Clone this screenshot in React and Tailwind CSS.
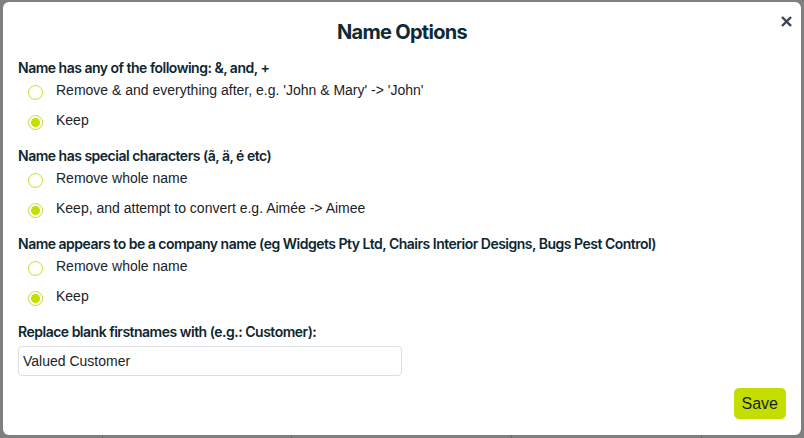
export default function App() {
    const sections = [
        {
            title: "Name has any of the following: &, and, +",
            options: ["Remove & and everything after, e.g. 'John & Mary' -> 'John'", "Keep"],
            selected: 1,
        },
        {
            title: "Name has special characters (ã, ä, é etc)",
            options: ["Remove whole name", "Keep, and attempt to convert e.g. Aimée -> Aimee"],
            selected: 1,
        },
        {
            title: "Name appears to be a company name (eg Widgets Pty Ltd, Chairs Interior Designs, Bugs Pest Control)",
            options: ["Remove whole name", "Keep"],
            selected: 1,
        },
    ];

    return (
        <div className="relative w-[804px] h-[438px] overflow-hidden bg-[#808080] font-['Liberation_Sans',Arial,sans-serif]">
            {/* dimmed page behind the modal */}
            <div className="absolute inset-x-0 bottom-0 h-[12px] flex">
                <div className="w-[103px] border-r border-[#6a6a6a]" />
                <div className="w-[189px] border-r border-[#6a6a6a]" />
                <div className="w-[220px] border-r border-[#6a6a6a]" />
                <div className="w-[190px] border-r border-[#6a6a6a]" />
                <div className="flex-1" />
            </div>

            <div className="absolute left-[3px] top-[2px] w-[798px] h-[433px] bg-white rounded-[6px] px-[15px] pt-[16px] pb-[16px] flex flex-col">
                <button className="absolute right-[9px] top-[13px] w-[12px] h-[12px] flex items-center justify-center text-[#3b4656]">
                    <svg viewBox="0 0 12 12" className="w-[11px] h-[11px]" fill="none" stroke="currentColor" strokeWidth="2.6" strokeLinecap="square">
                        <path d="M2 2 L10 10 M10 2 L2 10" />
                    </svg>
                </button>

                <h2 className="text-center text-[20px] leading-[28px] font-bold text-[#0f2a33] font-['Inter',sans-serif] tracking-[-0.7px]">
                    Name Options
                </h2>

                <div className="mt-[12px] flex flex-col gap-[16px]">
                    {sections.map((s, i) => (
                        <div key={i}>
                            <p className="text-[14px] leading-[20px] font-semibold text-[#0d2630] font-['Inter',sans-serif] tracking-[-0.5px]">
                                {s.title}
                            </p>
                            <div className="mt-[2px] flex flex-col gap-[10px]">
                                {s.options.map((o, j) => (
                                    <label key={j} className="flex items-start pl-[10px] text-[14px] leading-[20px] text-[#1a2328]">
                                        <span className="mt-[5px] w-[15px] h-[15px] rounded-full border-[1.5px] border-[#c6df1a] bg-white flex items-center justify-center shrink-0">
                                            {s.selected === j && (
                                                <span className="w-[9px] h-[9px] rounded-full bg-[#c4de00]" />
                                            )}
                                        </span>
                                        <span className="ml-[13px]">{o}</span>
                                    </label>
                                ))}
                            </div>
                        </div>
                    ))}

                    <div>
                        <p className="text-[14px] leading-[20px] font-semibold text-[#0d2630] font-['Inter',sans-serif] tracking-[-0.5px]">
                            Replace blank firstnames with (e.g.: Customer):
                        </p>
                        <input
                            defaultValue="Valued Customer"
                            className="mt-[4px] w-[384px] h-[30px] border border-[#dcdfe3] rounded-[4px] px-[4px] text-[14px] text-[#1a2328] outline-none"
                        />
                    </div>
                </div>

                <div className="mt-auto flex justify-end">
                    <button className="h-[31px] px-[8px] rounded-[5px] bg-[#c4de00] text-[16px] text-[#1a2328]">
                        Save
                    </button>
                </div>
            </div>
        </div>
    );
}
